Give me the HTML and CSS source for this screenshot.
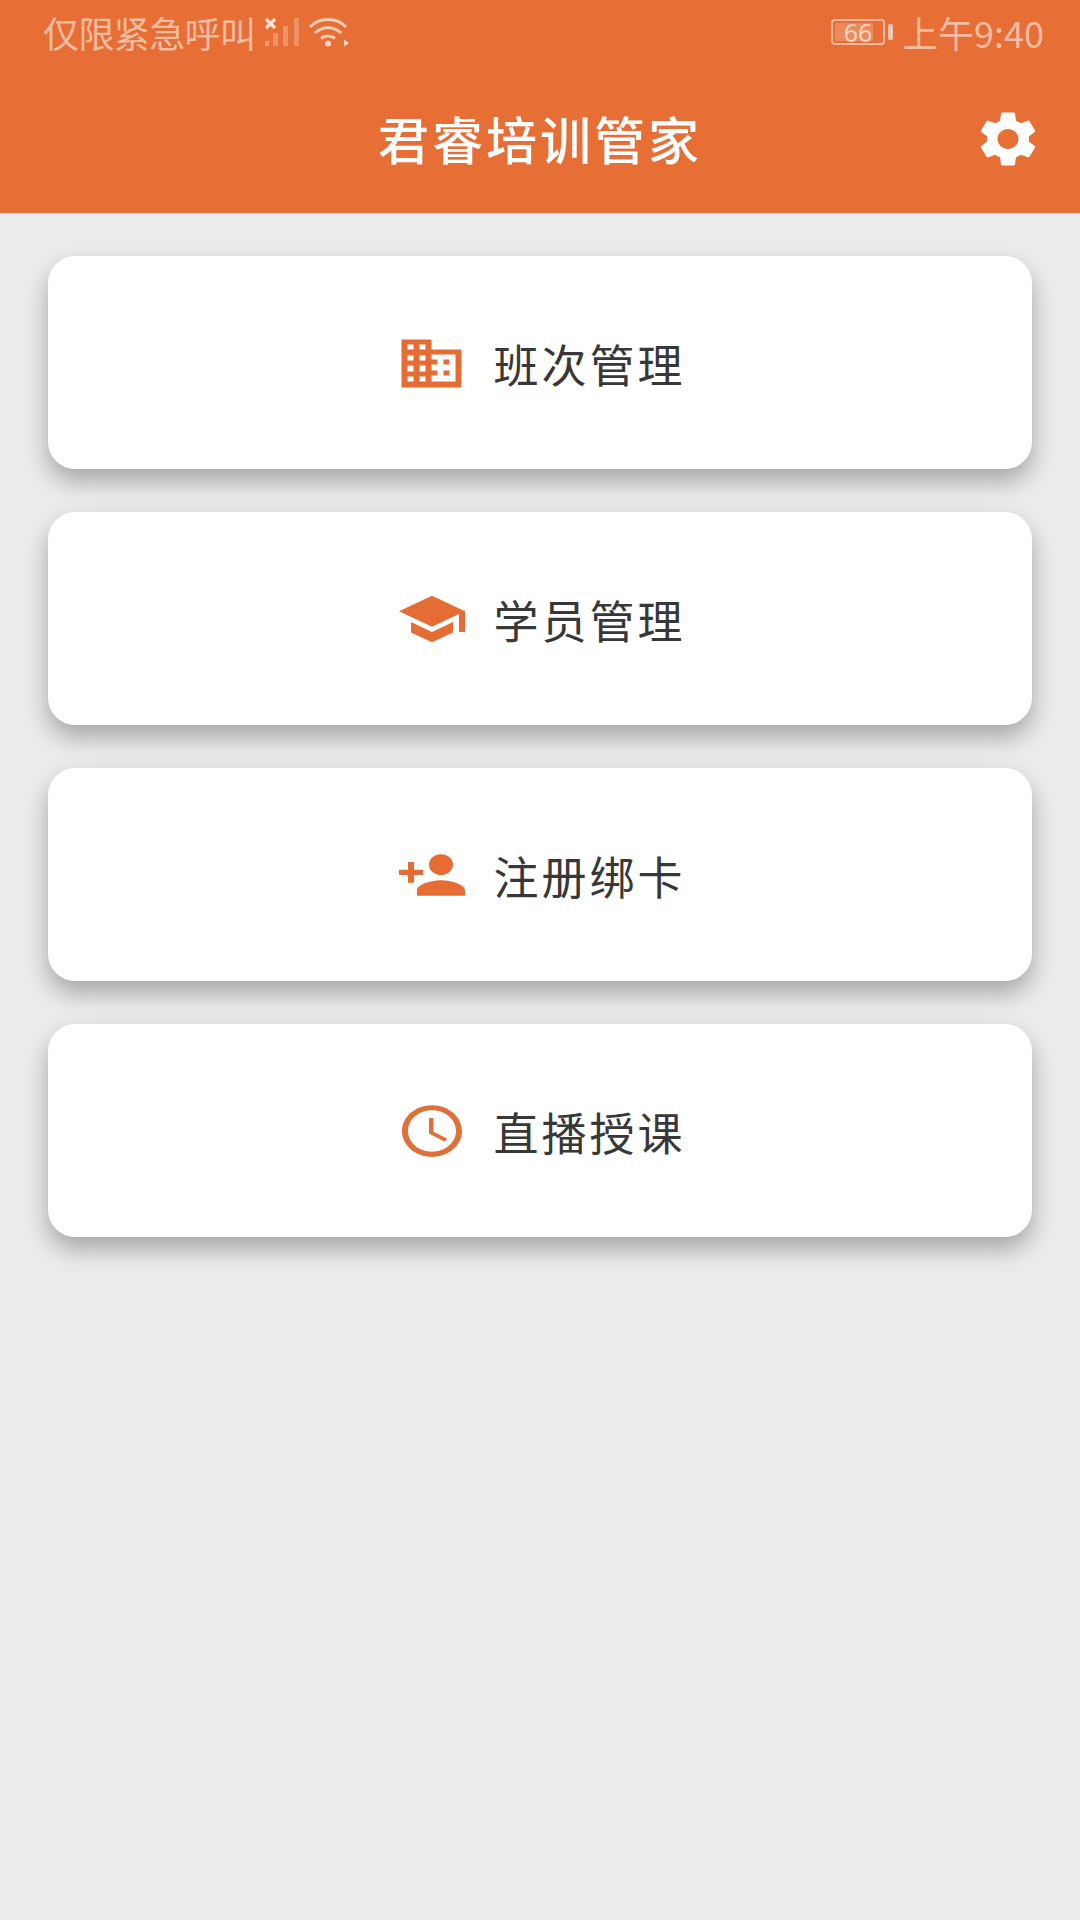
FILE: index.html
```html
<!DOCTYPE html>
<html lang="zh-CN">
<head>
  <meta charset="UTF-8">
  <title>君睿培训管家</title>
  <link rel="stylesheet" href="styles.css">
</head>
<body>
  <header class="app-header">
    <div class="status-bar">
      <div class="status-left">
        <span class="status-text status-carrier">仅限紧急呼叫</span>
        <svg class="signal" width="37" height="28" viewBox="0 0 37 28">
          <path d="M3 1l9 9M12 1l-9 9" stroke="#fff" stroke-width="3.4" fill="none" opacity=".8"/>
          <rect x="2" y="23" width="4" height="5" fill="#fff" opacity=".35"/>
          <rect x="10" y="15" width="5" height="13" fill="#fff" opacity=".25"/>
          <rect x="20" y="8" width="5" height="20" fill="#fff" opacity=".25"/>
          <rect x="31" y="0" width="5" height="28" fill="#fff" opacity=".25"/>
        </svg>
        <svg class="wifi" width="40" height="29" viewBox="0 0 40 29">
          <g fill="none" stroke="#fff" stroke-opacity=".65" stroke-width="3">
            <path d="M1 9C10 -1 28 -1 37 9"/>
            <path d="M6 15C13 8 25 8 32 15"/>
            <path d="M12 20.500C16 17 22 17 26 20.500"/>
          </g>
          <circle cx="19" cy="25.500" r="3" fill="#fff" fill-opacity=".75"/>
          <path d="M35 21.500l5 3.500-5 3.500z" fill="#fff" fill-opacity=".75"/>
        </svg>
      </div>
      <div class="status-right">
        <div class="battery">
          <div class="battery-body">
            <div class="battery-fill"></div>
            <span class="battery-num">66</span>
          </div>
          <div class="battery-tip"></div>
        </div>
        <span class="status-text">上午9:40</span>
      </div>
    </div>
    <div class="toolbar">
      <h1 class="title">君睿培训管家</h1>
      <svg class="settings" width="70" height="66" viewBox="0 0 24 24" preserveAspectRatio="none">
        <path fill="#fff" d="M19.140 12.940c.040-.300.060-.610.060-.940 0-.320-.020-.640-.070-.940l2.030-1.580c.180-.140.230-.410.120-.610l-1.920-3.320c-.120-.220-.370-.290-.590-.220l-2.390.960c-.500-.380-1.030-.700-1.620-.940l-.360-2.540c-.040-.240-.240-.410-.480-.410h-3.840c-.240 0-.430.170-.470.410l-.360 2.540c-.590.240-1.130.570-1.620.940l-2.390-.960c-.220-.080-.470 0-.590.220L2.740 8.870c-.120.210-.080.470.120.610l2.030 1.580c-.050.300-.090.630-.090.940s.020.640.070.940l-2.030 1.580c-.180.140-.230.410-.120.610l1.920 3.320c.120.220.370.290.590.220l2.390-.960c.500.380 1.030.700 1.620.940l.360 2.540c.050.240.240.410.480.410h3.840c.240 0 .440-.170.470-.410l.360-2.540c.590-.240 1.130-.560 1.620-.940l2.390.960c.220.080.470 0 .590-.220l1.920-3.320c.120-.220.070-.470-.120-.610l-2.010-1.580zM12 15.600c-1.980 0-3.600-1.620-3.600-3.600s1.620-3.600 3.600-3.600 3.600 1.620 3.600 3.600-1.620 3.600-3.600 3.600z"/>
      </svg>
    </div>
  </header>

  <main class="menu">
    <a class="card">
      <svg class="card-icon" width="72" height="62" viewBox="1.500 1.500 72 62">
        <path fill="#e56d33" fill-rule="evenodd" d="M7 9H37V19H67V57H7ZM13 14h6v5h-6zM25 14h6v5h-6zM13 25h6v5h-6zM25 25h6v5h-6zM13 35h6v6h-6zM25 35h6v6h-6zM13 46h6v5h-6zM25 46h6v5h-6zM37 24H61V51H37V45H43V40H37V34H43V29H37ZM49 29h6v5h-6zM49 40h6v5h-6z"/>
      </svg>
      <span class="card-label">班次管理</span>
    </a>
    <a class="card">
      <svg class="card-icon" width="72" height="62" viewBox="0 0 24 24" preserveAspectRatio="none">
        <path fill="#e56d33" d="M5 13.180v4L12 21l7-3.820v-4L12 17l-7-3.820zM12 3 1 9l11 6 9-4.910V17h2V9L12 3z"/>
      </svg>
      <span class="card-label">学员管理</span>
    </a>
    <a class="card">
      <svg class="card-icon" width="72" height="62" viewBox="0 0 24 24" preserveAspectRatio="none">
        <path fill="#e56d33" d="M15 12c2.210 0 4-1.790 4-4s-1.790-4-4-4-4 1.790-4 4 1.790 4 4 4zm-9-2V7H4v3H1v2h3v3h2v-3h3v-2H6zm9 4c-2.670 0-8 1.340-8 4v2h16v-2c0-2.660-5.330-4-8-4z"/>
      </svg>
      <span class="card-label">注册绑卡</span>
    </a>
    <a class="card">
      <svg class="card-icon" width="72" height="62" viewBox="0 0 24 24" preserveAspectRatio="none">
        <path fill="#e0703a" d="M11.990 2C6.470 2 2 6.480 2 12s4.470 10 9.990 10C17.520 22 22 17.520 22 12S17.520 2 11.990 2zM12 20c-4.420 0-8-3.580-8-8s3.580-8 8-8 8 3.580 8 8-3.580 8-8 8zm.500-13H11v6l5.250 3.150.750-1.230-4.500-2.670z"/>
      </svg>
      <span class="card-label">直播授课</span>
    </a>
  </main>
</body>
</html>
```

FILE: styles.css
```css
* {
  margin: 0;
  padding: 0;
  box-sizing: border-box;
}

body {
  width: 1080px;
  height: 1920px;
  overflow: hidden;
  background: #ececec;
  font-family: "Noto Sans CJK SC", "Noto Sans", sans-serif;
}

.app-header {
  height: 213px;
  background: #e76e35;
  display: flex;
  flex-direction: column;
}

.status-bar {
  height: 66px;
  padding: 0 36px 2px 43px;
  display: flex;
  justify-content: space-between;
  align-items: center;
}

.status-left,
.status-right {
  display: flex;
  align-items: center;
}

.status-text {
  font-size: 36px;
  line-height: 64px;
  color: rgba(255, 255, 255, .55);
  white-space: nowrap;
}

.status-carrier {
  letter-spacing: -.6px;
}

.signal {
  margin-left: 8px;
}

.wifi {
  margin-left: 9px;
}

.battery {
  display: flex;
  align-items: center;
  margin-right: 9px;
}

.battery-body {
  position: relative;
  width: 54px;
  height: 26px;
  border: 2px solid rgba(255, 255, 255, .5);
  border-radius: 4px;
  display: flex;
  align-items: center;
  justify-content: center;
}

.battery-fill {
  position: absolute;
  left: 2px;
  top: 2px;
  bottom: 2px;
  width: 38px;
  background: rgba(255, 255, 255, .2);
}

.battery-num {
  position: relative;
  font-family: "Noto Sans", sans-serif;
  font-size: 25px;
  line-height: 22px;
  color: rgba(255, 255, 255, .65);
}

.battery-tip {
  width: 5px;
  height: 16px;
  margin-left: 3px;
  background: rgba(255, 255, 255, .6);
  border-radius: 2px;
}

.toolbar {
  position: relative;
  flex: 1;
  display: flex;
  align-items: center;
  justify-content: center;
}

.title {
  font-size: 51px;
  font-weight: 500;
  letter-spacing: 3px;
  color: #fff;
  line-height: 70px;
  margin-top: -4px;
}

/* sits over the centered title row, pinned right */
.settings {
  position: absolute;
  right: 37px;
  top: 40px;
}

.menu {
  padding: 43px 48px 0;
  display: flex;
  flex-direction: column;
  gap: 43px;
}

.card {
  height: 213px;
  padding-left: 2px;
  background: #fff;
  border-radius: 27px;
  box-shadow: 0 12px 24px rgba(0, 0, 0, .3);
  display: flex;
  align-items: center;
  justify-content: center;
  gap: 25px;
}

.card-label {
  font-size: 45px;
  letter-spacing: 3px;
  color: #383838;
  line-height: 60px;
  margin-top: 3px;
}
```
